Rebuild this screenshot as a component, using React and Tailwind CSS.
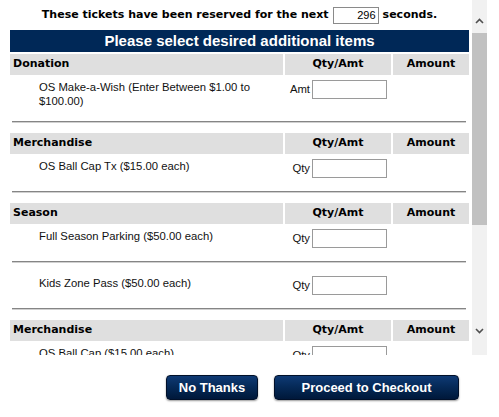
import React from 'react';

const sections = [
  { title: 'Donation', items: [{ name: 'OS Make-a-Wish (Enter Between $1.00 to $100.00)', label: 'Amt' }] },
  { title: 'Merchandise', items: [{ name: 'OS Ball Cap Tx ($15.00 each)', label: 'Qty' }] },
  {
    title: 'Season',
    items: [
      { name: 'Full Season Parking ($50.00 each)', label: 'Qty' },
      { name: 'Kids Zone Pass ($50.00 each)', label: 'Qty' },
    ],
  },
  { title: 'Merchandise', items: [{ name: 'OS Ball Cap ($15.00 each)', label: 'Qty' }] },
];

const verdana = { fontFamily: '"DejaVu Sans", Verdana, sans-serif' };

function Section({ section, first }) {
  return (
    <div className={first ? 'mt-[2px]' : 'mt-[10px]'}>
      {/* header row */}
      <div className="flex h-[21px] gap-[2px] text-[11px] font-bold text-black" style={verdana}>
        <div className="w-[273px] bg-[#dfdfdf] flex items-center pl-[3px]">{section.title}</div>
        <div className="w-[106px] bg-[#dfdfdf] flex items-center justify-center">Qty/Amt</div>
        <div className="w-[76px] bg-[#dfdfdf] flex items-center justify-center">Amount</div>
      </div>
      {section.items.map((item, i) => (
        <div key={i}>
          <div className={`flex ${i === 0 ? 'pt-[5px]' : 'pt-[13px]'} pb-[13px]`}>
            <div className="w-[275px] pl-[29px] pr-[6px] text-[11.3px] leading-[14px] text-[#111]">{item.name}</div>
            <div className="w-[106px] flex items-start justify-end pr-[4px] gap-[2px]">
              <span className="text-[11.3px] leading-[19px] text-[#111]">{item.label}</span>
              <input
                type="text"
                className="w-[75px] h-[19px] border border-[#9a9a9a] bg-white outline-none"
              />
            </div>
          </div>
          <div className="mx-[2px] w-[454px] border-t border-[#858585] border-b border-b-[#d0d0d0]" />
        </div>
      ))}
    </div>
  );
}

function Scrollbar() {
  return (
    <div className="w-[15px] h-[355px] bg-[#f1f1f1] flex flex-col">
      <div className="h-[33px] flex items-center justify-center pt-[8px]">
        <svg width="9" height="6" viewBox="0 0 9 6">
          <path d="M1 5 L4.5 1.5 L8 5" fill="none" stroke="#505050" strokeWidth="1.6" />
        </svg>
      </div>
      <div className="h-[192px] bg-[#c1c1c1]" />
      <div className="flex-1" />
      <div className="h-[38px] flex items-start justify-center pt-[11px]">
        <svg width="9" height="6" viewBox="0 0 9 6">
          <path d="M1 1 L4.5 4.5 L8 1" fill="none" stroke="#505050" strokeWidth="1.6" />
        </svg>
      </div>
    </div>
  );
}

export default function App() {
  return (
    <div className="w-[499px] h-[417px] bg-white" style={{ fontFamily: '"Liberation Sans", Arial, sans-serif' }}>
      <div className="flex">
        <div className="w-[472px] h-[355px] overflow-hidden">
          <div className="h-[30px] flex items-center justify-center gap-[4px] pl-[10px] pr-[3px] text-[11px] font-bold text-black" style={verdana}>
            <span>These tickets have been reserved for the next</span>
            <input
              type="text"
              readOnly
              value="296"
              className="w-[46px] h-[17px] border border-[#8a8a8a] text-right pr-[2px] text-[11px] font-normal outline-none"
              style={{ fontFamily: '"Liberation Sans", Arial, sans-serif' }}
            />
            <span>seconds.</span>
          </div>
          <div className="ml-[10px] w-[459px]">
            <div className="h-[22px] bg-[#002857] text-white text-[15px] font-bold flex items-center justify-center">
              Please select desired additional items
            </div>
            {sections.map((s, i) => (
              <Section key={i} section={s} first={i === 0} />
            ))}
          </div>
        </div>
        <Scrollbar />
      </div>
      <div className="flex pl-[166px] pt-[20px] gap-[16px]">
        <button className="w-[92px] h-[25px] rounded-[4px] border border-[#011029] bg-gradient-to-b from-[#0f3a74] to-[#00183a] text-white text-[13px] font-bold shadow-[0_1px_2px_rgba(0,0,0,0.4)]">
          No Thanks
        </button>
        <button className="w-[185px] h-[25px] rounded-[4px] border border-[#011029] bg-gradient-to-b from-[#0f3a74] to-[#00183a] text-white text-[13px] font-bold shadow-[0_1px_2px_rgba(0,0,0,0.4)]">
          Proceed to Checkout
        </button>
      </div>
    </div>
  );
}
